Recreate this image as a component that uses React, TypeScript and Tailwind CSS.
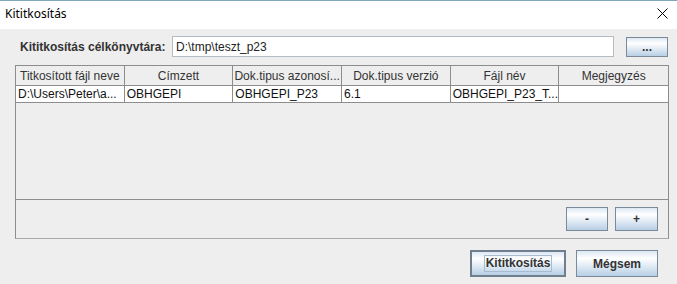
import React from "react";

const headers = [
  "Titkosított fájl neve",
  "Címzett",
  "Dok.tipus azonosí...",
  "Dok.tipus verzió",
  "Fájl név",
  "Megjegyzés",
];
const row = ["D:\\Users\\Peter\\a...", "OBHGEPI", "OBHGEPI_P23", "6.1", "OBHGEPI_P23_T...", ""];

const btn =
  "flex items-center justify-center bg-linear-to-b from-[#dde8f3] via-[#ffffff] via-30% to-[#b8cfe5] text-[#333333] font-bold text-[12px]";

export default function App() {
  return (
    <div
      className="w-[677px] h-[284px] bg-[#eeeeee] flex flex-col overflow-hidden"
      style={{ fontFamily: '"Liberation Sans", Arial, sans-serif' }}
    >
      {/* Title bar */}
      <div className="h-[29px] bg-white border-t border-[#7ea6bd] flex items-center justify-between pl-[5px] pr-[9px] pb-[3px] shrink-0">
        <span
          className="text-[12px] text-black"
          style={{ fontFamily: '"Noto Sans", "Open Sans", sans-serif' }}
        >
          Kititkosítás
        </span>
        <svg width="11" height="11" viewBox="0 0 11 11">
          <path d="M0.5 0.5 L10.5 10.5 M10.5 0.5 L0.5 10.5" stroke="#000" strokeWidth="1" />
        </svg>
      </div>

      {/* Body */}
      <div className="flex flex-col pl-[15px]">
        {/* Target directory row */}
        <div className="flex items-start mt-[7px] h-[21px]">
          <div className="w-[157px] h-[21px] pl-[5px] flex items-center text-[12px] font-bold text-[#333333]">
            Kititkosítás célkönyvtára:
          </div>
          <div className="w-[442px] h-[21px] bg-white border border-[#b4bcc4] flex items-center pl-[3px] text-[12px] text-[#222]">
            D:\tmp\teszt_p23
          </div>
          <div className={`${btn} ml-[12px] mt-[1px] w-[42px] h-[20px] border border-[#7a8a99] items-end pb-[3px] leading-none`}>
            ...
          </div>
        </div>

        {/* Table panel */}
        <div className="mt-[8px] w-[654px] h-[174px] border border-[#8d8d8d] border-b-[#a8a8a8] flex flex-col">
          <div className="h-[134px] border-b border-[#8d8d8d] flex flex-col">
            <div className="grid grid-cols-6 h-[20px] border-b border-[#8d8d8d]">
              {headers.map((h, i) => (
                <div
                  key={i}
                  className={`flex items-center justify-center text-[12px] text-[#333333] whitespace-nowrap overflow-hidden ${
                    i < 5 ? "border-r border-[#8d8d8d]" : ""
                  }`}
                >
                  {h}
                </div>
              ))}
            </div>
            <div className="grid grid-cols-6 h-[17px] bg-white border-b border-[#8d8d8d]">
              {row.map((c, i) => (
                <div
                  key={i}
                  className={`flex items-center pl-[2px] text-[12px] text-[#111] whitespace-nowrap overflow-hidden ${
                    i < 5 ? "border-r border-[#8d8d8d]" : ""
                  }`}
                >
                  {c}
                </div>
              ))}
            </div>
          </div>
          <div className="flex-1 flex items-center justify-end pr-[10px] gap-[7px]">
            <div className={`${btn} w-[42px] h-[24px] border border-[#7a8a99]`}>-</div>
            <div className={`${btn} w-[43px] h-[24px] border border-[#7a8a99]`}>+</div>
          </div>
        </div>

        {/* Bottom buttons */}
        <div className="flex justify-end gap-[10px] pr-[19px] mt-[11px]">
          <div className={`${btn} w-[96px] h-[27px] border-2 border-[#6f7f8f]`}>
            <span className="border border-[#a8bccf] px-[1px] leading-[15px]">Kititkosítás</span>
          </div>
          <div className={`${btn} w-[82px] h-[27px] border border-[#7a8a99]`}>Mégsem</div>
        </div>
      </div>
    </div>
  );
}
